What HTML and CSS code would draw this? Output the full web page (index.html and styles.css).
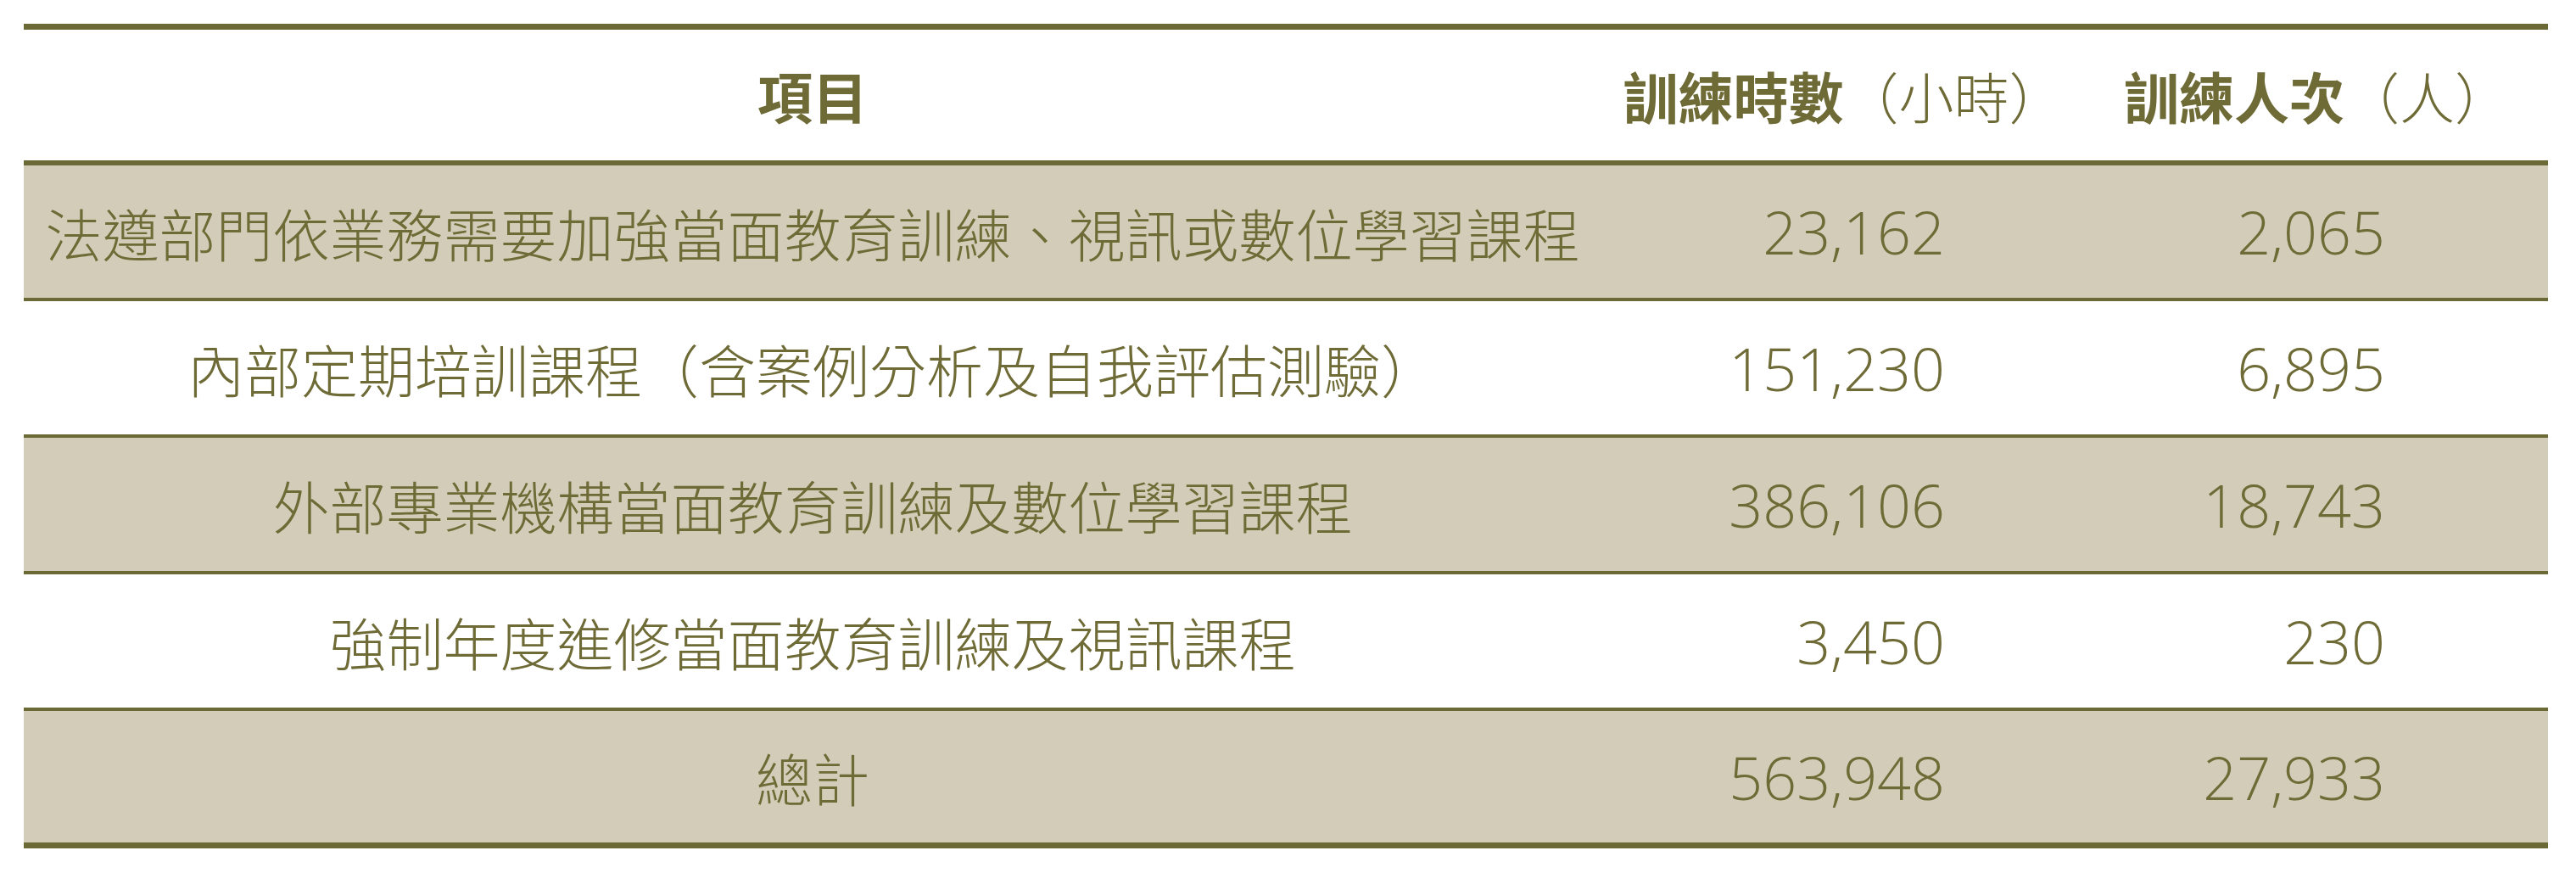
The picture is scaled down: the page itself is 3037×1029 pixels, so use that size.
FILE: index.html
```html
<!DOCTYPE html>
<html lang="zh-Hant">
<head>
<meta charset="utf-8">
<title>訓練統計</title>
<link rel="stylesheet" href="styles.css">
</head>
<body>
<div class="page">
  <div class="table">
    <div class="row head">
      <div class="cell item"><b>項目</b></div>
      <div class="cell hcol"><b>訓練時數</b><span class="unit">（小時）</span></div>
      <div class="cell hcol"><b>訓練人次</b><span class="unit">（人）</span></div>
    </div>
    <div class="row shade">
      <div class="cell item">法遵部門依業務需要加強當面教育訓練、視訊或數位學習課程</div>
      <div class="cell num c2">23,162</div>
      <div class="cell num c3">2,065</div>
    </div>
    <div class="row">
      <div class="cell item">內部定期培訓課程（含案例分析及自我評估測驗）</div>
      <div class="cell num c2">151,230</div>
      <div class="cell num c3">6,895</div>
    </div>
    <div class="row shade">
      <div class="cell item">外部專業機構當面教育訓練及數位學習課程</div>
      <div class="cell num c2">386,106</div>
      <div class="cell num c3">18,743</div>
    </div>
    <div class="row">
      <div class="cell item">強制年度進修當面教育訓練及視訊課程</div>
      <div class="cell num c2">3,450</div>
      <div class="cell num c3">230</div>
    </div>
    <div class="row shade last">
      <div class="cell item">總計</div>
      <div class="cell num c2">563,948</div>
      <div class="cell num c3">27,933</div>
    </div>
  </div>
</div>
</body>
</html>
```
FILE: styles.css
```css
html, body {
  margin: 0;
  padding: 0;
  background: #ffffff;
}

.page {
  padding: 28px 0 0 28px;
}

.table {
  width: 2976px;
  border-top: 7px solid #6b6935;
  border-bottom: 7px solid #6b6935;
  color: #6f6b37;
  font-family: "Noto Sans CJK TC", "Noto Sans CJK SC", sans-serif;
  font-weight: 300;
  font-size: 67px;
}

.row {
  display: grid;
  grid-template-columns: 1860px 551px 565px;
  height: 157px;
  border-top: 4px solid #6b6935;
}

.row.head {
  height: 154px;
  border-top: none;
  border-bottom: 6px solid #6b6935;
  font-size: 65px;
}

.row.head + .row {
  border-top: none;
  height: 156px;
}

.row.last {
  height: 155px;
}

.shade {
  background: #d3ccb8;
}

.cell {
  display: flex;
  align-items: center;
  justify-content: center;
  white-space: nowrap;
  line-height: 1;
}

.head b {
  font-weight: 700;
}

.head .hcol {
  padding-left: 20px;
}

.unit {
  font-weight: 300;
}

.num {
  justify-content: flex-end;
  font-family: "Open Sans", "Noto Sans", sans-serif;
  font-weight: 300;
  font-size: 70px;
}

.num.c2 {
  padding-right: 146px;
}

.num.c3 {
  padding-right: 192px;
}
```
